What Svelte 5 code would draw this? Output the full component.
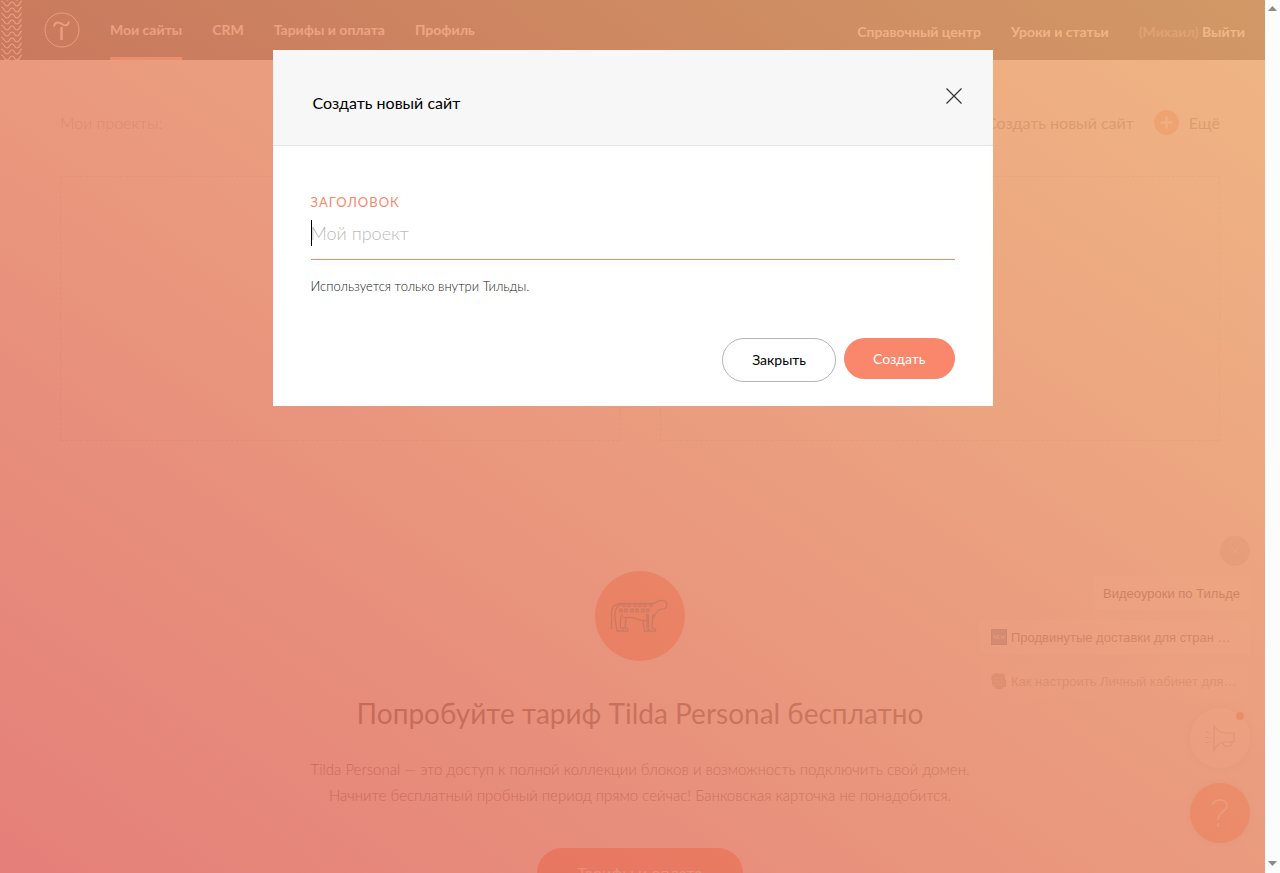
<script lang="ts">
  const nav = ['Мои сайты', 'CRM', 'Тарифы и оплата', 'Профиль'];
  const waves = [-5, 1, 7, 13, 19, 25, 31, 37, 43, 49, 55];
  const spotsTop = [14, 19, 25, 30, 35, 41];
  const spotsBottom = [11, 16, 22, 27, 33, 38];

  let open = $state(true);
  let title = $state('');

  function close() {
    open = false;
  }

  function submit(e: SubmitEvent) {
    e.preventDefault();
    close();
  }
</script>

<div class="screen">
  <header class="topbar">
    <svg class="waves" width="22" height="60" viewBox="0 0 22 60" aria-hidden="true">
      {#each waves as y}
        <path d="M1 {y} C4 {y} 4 {y + 5} 7 {y + 5} S9 {y + 1} 12 {y + 1} S14 {y + 5} 17 {y + 5} S20 {y} 22 {y}" />
      {/each}
    </svg>
    <a class="logo" href="#home" aria-label="Tilda">
      <svg width="36" height="36" viewBox="0 0 36 36">
        <circle cx="18" cy="18" r="17" />
        <path d="M10 14.5 C10.500 10.500 14 9.500 18 12 S24 13.500 25 9.500" stroke-width="2" />
        <path d="M17.500 15 V28" stroke-width="2.500" />
      </svg>
    </a>
    <nav class="menu">
      {#each nav as item, i}
        <a href="#{i}" class:active={i === 0}>{item}</a>
      {/each}
    </nav>
    <nav class="menu right">
      <a href="#help">Справочный центр</a>
      <a href="#lessons">Уроки и статьи</a>
      <span class="account"><span class="user">(Михаил)</span> <a href="#logout">Выйти</a></span>
    </nav>
  </header>

  <main class="page">
    <div class="toolbar">
      <span class="caption">Мои проекты:</span>
      <div class="actions">
        <a href="#new">Создать новый сайт</a>
        <button class="more">
          <svg width="25" height="25" viewBox="0 0 25 25" aria-hidden="true">
            <circle cx="12.5" cy="12.5" r="12.500" />
            <path d="M12.500 6.500 V18.500 M6.500 12.500 H18.500" />
          </svg>
          Ещё
        </button>
      </div>
    </div>

    <div class="projects">
      <div class="project"></div>
      <div class="project"></div>
    </div>

    <section class="promo">
      <div class="badge">
        <svg width="60" height="36" viewBox="0 0 60 36" fill="none" aria-hidden="true">
          <path d="M1.500 30 V14 C1.500 7 6 4.500 12 4.500 H43 C46 4 47 1.500 51 1.500 H53 C57 2 57 5 56.500 8 C55 10.500 52 10 50 10.500 C46 13 44 17 43 20" />
          <path d="M12 5 C6 7 4.500 11 5 19 L7 32 H18 V30 L15 29 L16 19 M12 15 C10 20 10 22 10.500 29 H13 V31" />
          <path d="M13 18.500 H22 C26 19 27 22 37 21.500 M33 21.500 L34.500 32 H45.500 V30 L42 29 L43 15 M37 15 V29 L40 31 M38 15 L39 29" />
          {#each spotsTop as x}
            <circle cx={x} cy="6" r="1.500" />
          {/each}
          {#each spotsBottom as x}
            <circle cx={x} cy="11.500" r="1.500" />
          {/each}
        </svg>
      </div>
      <h1>Попробуйте тариф Tilda Personal бесплатно</h1>
      <p>
        Tilda Personal — это доступ к полной коллекции блоков и возможность подключить свой домен.<br />
        Начните бесплатный пробный период прямо сейчас! Банковская карточка не понадобится.
      </p>
      <a class="promo-btn" href="#pricing">Тарифы и оплата</a>
    </section>
  </main>

  <aside class="helper">
    <button class="dismiss" aria-label="Скрыть">
      <svg width="10" height="10" viewBox="0 0 10 10"><path d="M1 1 L9 9 M9 1 L1 9" /></svg>
    </button>
    <a class="tip" href="#video">Видеоуроки по Тильде</a>
    <a class="tip wide" href="#delivery">
      <svg width="16" height="16" viewBox="0 0 16 16" aria-hidden="true">
        <rect x="0.500" y="0.500" width="15" height="15" fill="#4d6e96" stroke="#2d4e75" />
        <path d="M3 9.500 V6.500 L5 9.500 V6.500 M8.500 6.500 H6.500 V9.500 H8.500 M6.500 8 H8 M10 6.500 L10.500 9.500 L11.500 7.500 L12.500 9.500 L13.500 6.500" fill="none" stroke="#ccd" />
      </svg>
      <span>Продвинутые доставки для стран …</span>
    </a>
    <a class="tip wide faded" href="#cabinet">
      <svg width="16" height="16" viewBox="0 0 16 16" aria-hidden="true">
        <path d="M2 1 Q5 -1 8 1 Q11 -1 14 2 V6 L15 7 V14 H13 L11 16 H5 L3 13 L1 11 V8 L0 5 Z" fill="#999" />
        <path d="M2 5.500 H12 M3 8.500 H12 M4 11.500 H11" fill="none" stroke="#bbb" />
      </svg>
      <span>Как настроить Личный кабинет для…</span>
    </a>
    <button class="round news" aria-label="Новости">
      <svg width="32" height="28" viewBox="0 0 32 28" aria-hidden="true">
        <path d="M10 2 Q15 9 20 9 H30 V18 H20 Q15 18 10 26 Z M19 18 C19 24 28 24 28 18 M2 8 L5 9 M1 13.500 H5 M2 19 L5 18" />
      </svg>
    </button>
    <button class="round ask" aria-label="Помощь">
      <svg width="18" height="30" viewBox="0 0 18 30" aria-hidden="true">
        <path d="M1.500 7 C3 0.500 16 -0.500 16 8 C16 14 7.500 13 7 22 M7 25 V29" />
      </svg>
    </button>
  </aside>

  <div class="scrollbar">
    <svg width="9" height="5" viewBox="0 0 9 5"><path d="M0 5 L4.500 0 L9 5 Z" /></svg>
    <svg width="9" height="5" viewBox="0 0 9 5"><path d="M0 0 L4.500 5 L9 0 Z" /></svg>
  </div>

  {#if open}
    <div class="overlay">
      <form class="dialog" role="dialog" aria-labelledby="dialog-title" onsubmit={submit}>
        <div class="dialog-head">
          <h2 id="dialog-title">Создать новый сайт</h2>
          <button type="button" class="cross" aria-label="Закрыть окно" onclick={close}>
            <svg width="16" height="16" viewBox="0 0 16 16"><path d="M0.500 0.500 L15.500 15.500 M15.500 0.500 L0.500 15.500" /></svg>
          </button>
        </div>
        <div class="dialog-body">
          <label for="site-title">Заголовок</label>
          <div class="field">
            <input id="site-title" type="text" placeholder="Мой проект" bind:value={title} />
            <i class="caret"></i>
          </div>
          <p class="hint">Используется только внутри Тильды.</p>
          <div class="buttons">
            <button type="button" class="btn outline" onclick={close}>Закрыть</button>
            <button type="submit" class="btn primary">Создать</button>
          </div>
        </div>
      </form>
    </div>
  {/if}
</div>

<style>
  :global(body) {
    background: #f4f4f4;
    font-family: Lato, 'Open Sans', sans-serif;
  }

  .screen {
    position: relative;
    height: 100vh;
    overflow: hidden;
  }

  a {
    color: inherit;
    text-decoration: none;
  }

  button {
    padding: 0;
    border: none;
    background: none;
    font-family: inherit;
    cursor: pointer;
  }

  svg {
    flex-shrink: 0;
  }

  .topbar {
    display: flex;
    height: 60px;
    padding-right: 35px;
    background: #000;
    color: #fff;
  }

  .waves path {
    fill: none;
    stroke: #fff;
    stroke-width: 1.2;
  }

  .logo {
    display: flex;
    align-items: center;
    margin: 0 30px 0 22px;
  }

  .logo svg {
    fill: none;
    stroke: #fff;
  }

  .menu {
    display: flex;
    gap: 30px;
    font-size: 14px;
    font-weight: 700;
    line-height: 60px;
    white-space: nowrap;
  }

  .menu .active {
    box-shadow: inset 0 -3px #fa876b;
  }

  .right {
    margin-left: auto;
    line-height: 64px;
  }

  .user {
    opacity: 0.4;
  }

  .page {
    max-width: 1160px;
    margin: 0 auto;
    padding-top: 48px;
  }

  .toolbar {
    display: flex;
    justify-content: space-between;
    height: 30px;
    margin-bottom: 38px;
    font-size: 16px;
    line-height: 30px;
    color: #555;
  }

  .caption {
    font-weight: 300;
    color: #888;
  }

  .actions {
    display: flex;
    gap: 20px;
  }

  .more {
    display: flex;
    align-items: center;
    gap: 10px;
    height: 28px;
    font-size: 16px;
    color: #555;
  }

  .more circle {
    fill: #fa876b;
  }

  .more path {
    stroke: #fff;
    stroke-width: 2;
  }

  .projects {
    display: grid;
    grid-template-columns: 1fr 1fr;
    gap: 40px;
  }

  .project {
    height: 263px;
    border: 1px dashed #ccc;
  }

  .promo {
    padding-top: 130px;
    text-align: center;
    color: #000;
  }

  .badge {
    display: flex;
    align-items: center;
    justify-content: center;
    width: 90px;
    height: 90px;
    margin: 0 auto 29px;
    border-radius: 50%;
    background: #fa6442;
  }

  .badge svg {
    padding-top: 2px;
    stroke: #222;
    stroke-width: 1.3;
  }

  h1 {
    margin: 0 0 20px;
    font-size: 28px;
    font-weight: 400;
    line-height: 46px;
  }

  .promo p {
    margin: 0 0 40px;
    font-size: 15px;
    font-weight: 300;
    line-height: 26px;
  }

  .promo-btn {
    display: inline-block;
    padding: 0 40px;
    border-radius: 25px;
    background: #fa5a36;
    color: #fff;
    font-size: 16px;
    line-height: 50px;
  }

  .helper {
    position: absolute;
    right: 30px;
    bottom: 30px;
    display: flex;
    flex-direction: column;
    align-items: flex-end;
    gap: 10px;
    width: 270px;
    font-family: 'Liberation Sans', Arial, sans-serif;
  }

  .dismiss {
    width: 30px;
    height: 30px;
    border-radius: 50%;
    background: #c4c4c4;
    line-height: 0;
  }

  .dismiss path {
    stroke: #eee;
  }

  .tip {
    display: flex;
    align-items: center;
    gap: 4px;
    box-sizing: border-box;
    height: 34px;
    padding: 0 10px;
    border-radius: 3px;
    background: #fff;
    color: #000;
    font-size: 13px;
    white-space: nowrap;
  }

  .wide {
    width: 100%;
    padding: 0 11px;
    color: #333;
  }

  .faded {
    background: #f8f8f8;
    color: #888;
  }

  .round {
    position: relative;
    display: flex;
    align-items: center;
    justify-content: center;
    width: 60px;
    height: 60px;
    border-radius: 50%;
    background: #fff;
    box-shadow: 0 0 10px rgba(0, 0, 0, 0.15);
  }

  .round path {
    fill: none;
    stroke: #aaa;
    stroke-width: 1.2;
  }

  .news::after {
    content: '';
    position: absolute;
    top: 4px;
    right: 6px;
    width: 8px;
    height: 8px;
    border-radius: 50%;
    background: #fa6442;
  }

  .ask {
    margin-top: 5px;
    background: #fa7656;
  }

  .round.ask path {
    stroke: #fff;
    stroke-width: 1.5;
  }

  .scrollbar {
    position: absolute;
    top: 0;
    right: 0;
    bottom: 0;
    z-index: 2;
    display: flex;
    flex-direction: column;
    align-items: center;
    justify-content: space-between;
    box-sizing: border-box;
    width: 15px;
    padding: 6px 0 7px;
    background: #fcfcfc;
  }

  .scrollbar path {
    fill: #8b8b8b;
  }

  .overlay {
    position: absolute;
    inset: 0 15px 0 0;
    z-index: 1;
    padding-top: 50px;
    background: linear-gradient(to top right, rgba(226, 108, 101, 0.86), rgba(239, 174, 116, 0.88));
  }

  .dialog {
    max-width: 720px;
    margin: 0 auto;
    background: #fff;
  }

  .dialog-head {
    display: flex;
    align-items: center;
    justify-content: space-between;
    height: 95px;
    padding: 0 31px 0 40px;
    border-bottom: 1px solid #e5e5e5;
    background: #f7f7f7;
  }

  h2 {
    margin: 0;
    padding-top: 10px;
    font-size: 16px;
    font-weight: 400;
    line-height: 24px;
  }

  .cross {
    padding-bottom: 3px;
    line-height: 0;
  }

  .cross path {
    stroke: #333;
    stroke-width: 1.2;
  }

  .dialog-body {
    padding: 46px 38px 24px;
  }

  label {
    display: block;
    color: #fa876b;
    font-size: 13px;
    line-height: 20px;
    letter-spacing: 1px;
    text-transform: uppercase;
  }

  .field {
    position: relative;
  }

  input {
    box-sizing: border-box;
    display: block;
    width: 100%;
    height: 48px;
    padding: 0 0 5px;
    border: none;
    border-bottom: 1px solid #fa876b;
    outline: none;
    font-family: inherit;
    font-size: 18px;
    font-weight: 300;
  }

  input::placeholder {
    color: #bbb;
    opacity: 1;
  }

  .caret {
    position: absolute;
    top: 8px;
    left: 0;
    width: 1px;
    height: 26px;
    background: #000;
  }

  .hint {
    margin: 14px 0 40px;
    color: #222;
    font-size: 13px;
    font-weight: 300;
    line-height: 24px;
  }

  .buttons {
    display: flex;
    align-items: flex-start;
    justify-content: flex-end;
    gap: 8px;
  }

  .btn {
    padding: 0 29px;
    border-radius: 22px;
    font-size: 14px;
    line-height: 41px;
  }

  .outline {
    border: 1px solid #b5b5b5;
    color: #000;
    line-height: 42px;
  }

  .primary {
    background: #fa876b;
    color: #fff;
  }
</style>
